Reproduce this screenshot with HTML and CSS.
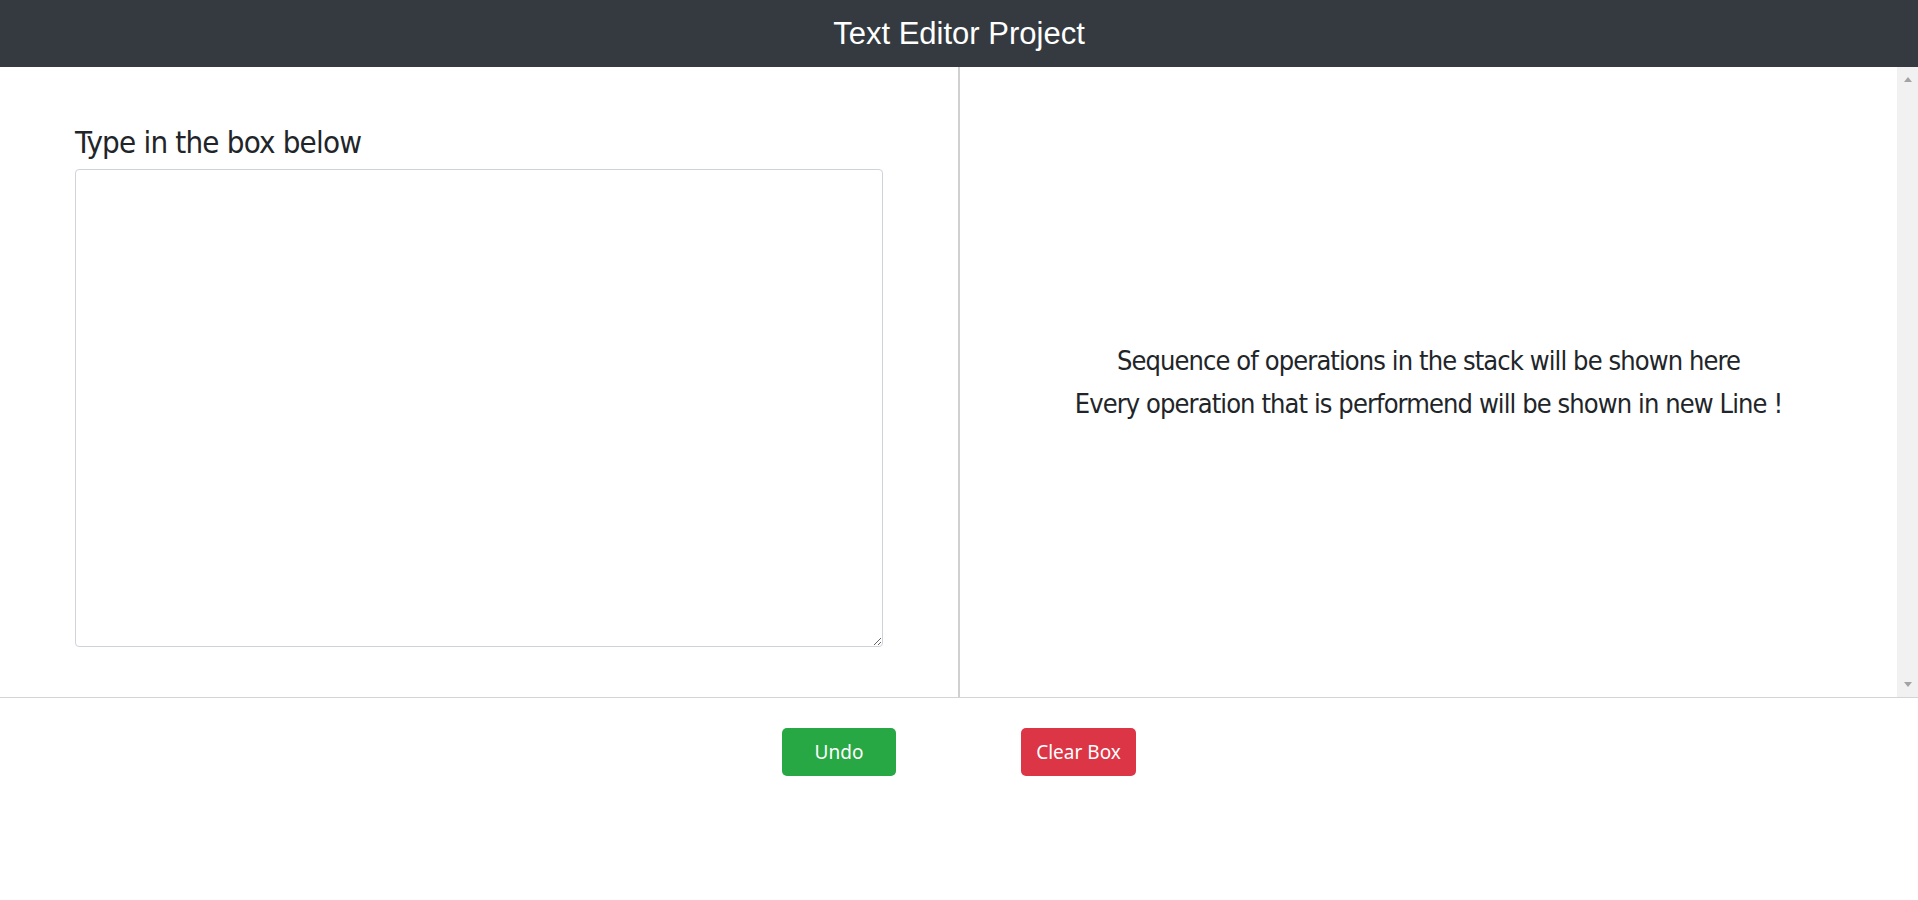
FILE: index.html
```html
<!DOCTYPE html>
<html lang="en">

<head>
  <meta charset="UTF-8">
  <meta name="viewport" content="width=device-width, initial-scale=1.0">
  <title>Text Editor Project</title>
  <link rel="stylesheet" href="styles.css">
</head>

<body>
  <div class="navbar">Text Editor Project</div>

  <div class="editor">
    <div class="editor-left">
      <h2 class="box-title">Type in the box below</h2>
      <textarea id="text-box" class="text-box"></textarea>
    </div>
    <div class="editor-right">
      <div class="stack-view" id="stack-view">
        <div class="stack-line">Sequence of operations in the stack will be shown here</div>
        <div class="stack-line">Every operation that is performend will be shown in new Line !</div>
      </div>
      <div class="scrollbar">
        <span class="arrow-up"></span>
        <span class="arrow-down"></span>
      </div>
    </div>
  </div>

  <div class="buttons">
    <button class="btn btn-undo">Undo</button>
    <button class="btn btn-clear">Clear Box</button>
  </div>
</body>

</html>
```

FILE: styles.css
```css
body {
  margin: 0;
  font-family: "Liberation Sans", Arial, sans-serif;
  color: #212529;
  background-color: #fff;
}

.navbar {
  height: 67px;
  line-height: 67px;
  background-color: #343a40;
  color: #fff;
  text-align: center;
  font-size: 31px;
}

.editor {
  display: flex;
  height: 630px;
  border-bottom: 1px solid #d4d4d4;
}

.editor-left {
  width: 960px;
  flex: none;
  box-sizing: border-box;
  padding: 55px 75px 0 75px;
  border-right: 2px solid #d0d0d0;
}

.box-title {
  margin: 0 0 7px 0;
  font-family: "DejaVu Sans Condensed", sans-serif;
  font-weight: normal;
  font-size: 31px;
  line-height: 40px;
  letter-spacing: -0.8px;
}

.text-box {
  display: block;
  width: 808px;
  height: 478px;
  box-sizing: border-box;
  border: 1px solid #ced4da;
  border-radius: 4px;
  padding: 6px 12px;
  font-size: 16px;
  resize: both;
}

.editor-right {
  flex: 1;
  display: flex;
}

.stack-view {
  flex: 1;
  display: flex;
  flex-direction: column;
  justify-content: center;
  align-items: center;
  font-family: "DejaVu Sans Condensed", sans-serif;
  font-size: 27px;
  line-height: 43px;
  letter-spacing: -0.9px;
}

.scrollbar {
  width: 21px;
  background-color: #f1f1f1;
  display: flex;
  flex-direction: column;
  justify-content: space-between;
  align-items: center;
  padding: 10px 0;
  box-sizing: border-box;
}

.arrow-up,
.arrow-down {
  width: 0;
  height: 0;
  border-left: 4.5px solid transparent;
  border-right: 4.5px solid transparent;
}

.arrow-up {
  border-bottom: 5px solid #a3a3a3;
}

.arrow-down {
  border-top: 5px solid #a3a3a3;
}

.buttons {
  display: flex;
  justify-content: center;
  gap: 125px;
  padding-top: 30px;
}

.btn {
  height: 48px;
  border: none;
  border-radius: 5px;
  color: #fff;
  font-family: "Noto Sans", sans-serif;
  font-size: 19px;
  cursor: pointer;
}

.btn-undo {
  width: 114px;
  background-color: #28a745;
}

.btn-clear {
  width: 115px;
  background-color: #dc3545;
}
```
